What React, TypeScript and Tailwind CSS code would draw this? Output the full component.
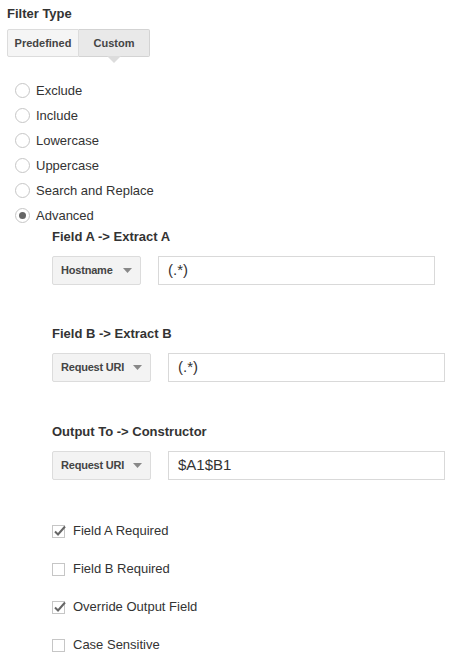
import React from "react";

const font = { fontFamily: '"Liberation Sans", Arial, sans-serif' };

function Radio({ label, checked }: { label: string; checked?: boolean }) {
  return (
    <div className="flex h-[25px] items-center">
      <div className="ml-[8px] flex h-[15px] w-[15px] items-center justify-center rounded-full border border-[#c6c6c6] bg-white">
        {checked && <div className="h-[7px] w-[7px] rounded-full bg-[#666]" />}
      </div>
      <span className="ml-[6px] text-[13px] text-[#333]">{label}</span>
    </div>
  );
}

function Check({ label, checked }: { label: string; checked?: boolean }) {
  return (
    <div className="flex h-[20px] items-center">
      <div className="relative h-[13px] w-[13px] border border-[#c6c6c6] bg-white">
        {checked && (
          <svg className="absolute left-[0px] top-[-2px]" width="14" height="14" viewBox="0 0 14 14">
            <path d="M2 7.5 L5 10.5 L12 2.5" fill="none" stroke="#666" strokeWidth="2" />
          </svg>
        )}
      </div>
      <span className="ml-[8px] text-[13px] text-[#333]">{label}</span>
    </div>
  );
}

function FieldRow({ label, sel, selW, value }: { label: string; sel: string; selW: string; value: string }) {
  return (
    <div className="flex flex-col">
      <div className="h-[16px] text-[13px] font-bold leading-[16px] text-[#333]">{label}</div>
      <div className="mt-[11px] flex">
        <div className={`flex h-[29px] ${selW} items-center justify-between rounded-[2px] border border-[#dcdcdc] bg-[#f3f3f3] pl-[8px] pr-[8px]`}>
          <span className="text-[11px] font-bold tracking-[-0.2px] text-[#444]">{sel}</span>
          <svg width="9" height="5" viewBox="0 0 9 5">
            <path d="M0 0 L9 0 L4.5 5 Z" fill="#888" />
          </svg>
        </div>
        <div className="ml-[17px] flex h-[29px] w-[277px] items-center border border-[#d9d9d9] bg-white pl-[9px] text-[15px] text-[#333]">
          {value}
        </div>
      </div>
    </div>
  );
}

export default function App() {
  return (
    <div className="min-h-[671px] w-[469px] bg-white pl-[7px] pt-[6px]" style={font}>
      <div className="h-[16px] text-[13px] font-bold leading-[16px] text-[#333]">Filter Type</div>
      <div className="mt-[7px] flex h-[28px] w-[143px]">
        <div className="flex w-[72px] items-center justify-center rounded-l-[2px] border border-[#dcdcdc] bg-[#f5f5f5] text-[11px] font-bold text-[#444]">
          Predefined
        </div>
        <div className="relative flex w-[71px] items-center justify-center rounded-r-[2px] border border-l-0 border-[#d3d3d3] bg-[#e9e9e9] text-[11px] font-bold text-[#444]">
          Custom
          <div className="absolute left-[28px] top-[26px] h-0 w-0 border-l-[7px] border-r-[7px] border-t-[7px] border-l-transparent border-r-transparent border-t-[#dcdcdc]" />
        </div>
      </div>
      <div className="mt-[21px] flex flex-col">
        <Radio label="Exclude" />
        <Radio label="Include" />
        <Radio label="Lowercase" />
        <Radio label="Uppercase" />
        <Radio label="Search and Replace" />
        <Radio label="Advanced" checked />
      </div>
      <div className="ml-[45px] mt-[1px] flex flex-col">
        <FieldRow label="Field A -> Extract A" sel="Hostname" selW="w-[89px]" value="(.*)" />
        <div className="h-[41px]" />
        <FieldRow label="Field B -> Extract B" sel="Request URI" selW="w-[99px]" value="(.*)" />
        <div className="h-[42px]" />
        <FieldRow label="Output To -> Constructor" sel="Request URI" selW="w-[99px]" value="$A1$B1" />
        <div className="mt-[41px] flex flex-col gap-[18px]">
          <Check label="Field A Required" checked />
          <Check label="Field B Required" />
          <Check label="Override Output Field" checked />
          <Check label="Case Sensitive" />
        </div>
      </div>
    </div>
  );
}
